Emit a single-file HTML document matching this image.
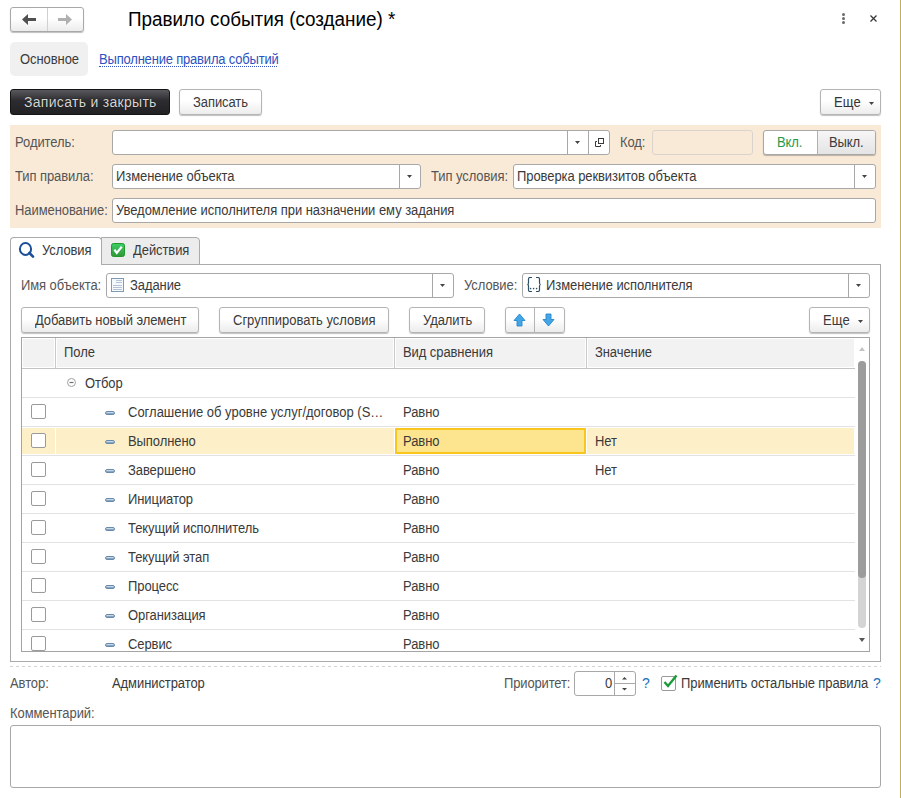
<!DOCTYPE html>
<html><head><meta charset="utf-8">
<style>
*{box-sizing:border-box;margin:0;padding:0}
html,body{width:901px;height:798px;overflow:hidden;background:#fff}
body{position:relative;font-family:"Liberation Sans",sans-serif;font-size:13px;color:#3a3a3a}
.a{position:absolute}
.t{position:absolute;line-height:15px;white-space:nowrap;letter-spacing:-0.08px;font-size:14px;transform:scaleX(0.928);transform-origin:0 0}
.lbl{color:#555}
.btn{position:absolute;border:1px solid #b4b4b4;border-radius:3px;background:linear-gradient(#fff 0%,#fff 45%,#ececec 100%);box-shadow:0 1px 1px rgba(0,0,0,.25)}
.inp{position:absolute;border:1px solid #a8a8a8;border-radius:3px;background:#fff}
.dd{position:absolute;top:0;bottom:0;border-left:1px solid #a8a8a8}
.tri{position:absolute;width:0;height:0;border-left:3px solid transparent;border-right:3px solid transparent;border-top:3px solid #444}
.hline{position:absolute;height:1px;background:#e2e2e2}
.cb{position:absolute;width:15px;height:15px;border:1px solid #9a9a9a;border-radius:2px;background:#fff}
.mi{position:absolute;width:10px;height:4px;border-radius:2px;background:linear-gradient(#c6d6e6 50%,#86a6c4 50%);border:1px solid #6a8aaa}
</style></head><body>

<!-- nav buttons -->
<div class="btn" style="left:10px;top:7px;width:74px;height:25px;border-color:#a8a8a8"></div>
<div class="a" style="left:47px;top:8px;width:1px;height:23px;background:#d0d0d0"></div>
<svg class="a" style="left:22px;top:14px" width="15" height="12" viewBox="0 0 15 12"><path d="M0 5.5 L6 0 V4 H14 V7 H6 V11 Z" fill="#505050"/></svg>
<svg class="a" style="left:57px;top:14px" width="15" height="12" viewBox="0 0 15 12"><path d="M15 5.5 L9 0 V4 H1 V7 H9 V11 Z" fill="#b0b0b0"/></svg>

<!-- title -->
<div class="t" style="left:128px;top:8px;font-size:20px;line-height:22px;color:#000;letter-spacing:0;transform:scaleX(0.943)">Правило события (создание) *</div>

<!-- kebab + close -->
<div class="a" style="left:842px;top:13px;width:3px;height:3px;border-radius:1.5px;background:#6a6a6a"></div>
<div class="a" style="left:842px;top:17px;width:3px;height:3px;border-radius:1.5px;background:#6a6a6a"></div>
<div class="a" style="left:842px;top:21px;width:3px;height:3px;border-radius:1.5px;background:#6a6a6a"></div>
<svg class="a" style="left:869px;top:14px" width="9" height="9" viewBox="0 0 9 9"><path d="M1.5 1.5 L7.5 7.5 M7.5 1.5 L1.5 7.5" stroke="#333" stroke-width="1.2"/></svg>

<!-- right olive line -->
<div class="a" style="left:900px;top:0;width:1px;height:798px;background:#c1ae56"></div>

<!-- page tabs -->
<div class="a" style="left:10px;top:42px;width:78px;height:34px;border-radius:5px;background:#f0f0f0"></div>
<div class="t" style="left:20px;top:52px;color:#3a3a3a">Основное</div>
<div class="t" style="left:99px;top:52px;color:#2d52c0;letter-spacing:-0.2px">Выполнение правила событий</div>
<div class="a" style="left:99px;top:66px;width:178px;height:1px;border-bottom:1px dotted #2d52c0"></div>

<!-- command bar -->
<div class="a" style="left:10px;top:89px;width:160px;height:26px;border-radius:3px;background:linear-gradient(#59595d 0%,#2c2c30 45%,#222225 100%);border:1px solid #141414"></div>
<div class="t" style="left:24px;top:95px;color:#d6d6d6;font-size:14px;letter-spacing:0.3px;text-shadow:0 0 1px #000;transform:none">Записать и закрыть</div>
<div class="btn" style="left:179px;top:89px;width:83px;height:26px"></div>
<div class="t" style="left:193px;top:95px;color:#3a3a3a">Записать</div>
<div class="btn" style="left:820px;top:89px;width:61px;height:26px"></div>
<div class="t" style="left:834px;top:95px;color:#333;letter-spacing:0.2px">Еще</div>
<svg class="a" style="left:869px;top:102px" width="5" height="3" viewBox="0 0 5 3"><path d="M0 0H5L2.5 3Z" fill="#444"/></svg>

<!-- peach panel -->
<div class="a" style="left:10px;top:125px;width:871px;height:103px;background:#f9ead7"></div>
<div class="t lbl" style="left:15px;top:135px">Родитель:</div>
<div class="inp" style="left:112px;top:130px;width:498px;height:25px">
  <div class="dd" style="left:454px;width:21px"><svg class="a" style="left:7px;top:10px" width="5" height="3" viewBox="0 0 5 3"><path d="M0 0H5L2.5 3Z" fill="#444"/></svg></div>
  <div class="dd" style="left:475px;width:21px"></div>
</div>
<svg class="a" style="left:594px;top:137px" width="11" height="11" viewBox="0 0 11 11"><rect x="4.5" y="1.5" width="5" height="5" fill="none" stroke="#3a3a3a"/><path d="M3 4.5H1.5V9.5H6.5V8" fill="none" stroke="#3a3a3a"/></svg>
<div class="t lbl" style="left:620px;top:135px">Код:</div>
<div class="a" style="left:652px;top:130px;width:101px;height:25px;border:1px solid #dcd4cc;border-radius:3px;background:#f9ead7"></div>
<div class="btn" style="left:763px;top:130px;width:113px;height:25px;background:#fff;border-color:#a8a8a8"></div>
<div class="a" style="left:817px;top:131px;width:58px;height:23px;background:linear-gradient(#f6f6f6,#e4e4e4);border-left:1px solid #b0b0b0;border-radius:0 2px 2px 0"></div>
<div class="t" style="left:777px;top:135px;color:#1e9a4a">Вкл.</div>
<div class="t" style="left:829px;top:135px;color:#3a3a3a">Выкл.</div>

<div class="t lbl" style="left:15px;top:169px">Тип правила:</div>
<div class="inp" style="left:112px;top:164px;width:309px;height:25px">
  <div class="dd" style="left:286px;width:21px"><svg class="a" style="left:7px;top:10px" width="5" height="3" viewBox="0 0 5 3"><path d="M0 0H5L2.5 3Z" fill="#444"/></svg></div>
</div>
<div class="t" style="left:116px;top:169px">Изменение объекта</div>
<div class="t lbl" style="left:431px;top:169px">Тип условия:</div>
<div class="inp" style="left:513px;top:164px;width:363px;height:25px">
  <div class="dd" style="left:340px;width:21px"><svg class="a" style="left:7px;top:10px" width="5" height="3" viewBox="0 0 5 3"><path d="M0 0H5L2.5 3Z" fill="#444"/></svg></div>
</div>
<div class="t" style="left:517px;top:169px">Проверка реквизитов объекта</div>

<div class="t lbl" style="left:15px;top:203px">Наименование:</div>
<div class="inp" style="left:112px;top:198px;width:764px;height:25px"></div>
<div class="t" style="left:116px;top:203px;letter-spacing:-0.04px">Уведомление исполнителя при назначении ему задания</div>

<!-- tabs -->
<div class="a" style="left:10px;top:264px;width:871px;height:398px;border:1px solid #aaa"></div>
<div class="a" style="left:10px;top:237px;width:92px;height:28px;border:1px solid #aaa;border-bottom:none;border-radius:4px 4px 0 0;background:#fff"></div>
<div class="a" style="left:101px;top:237px;width:99px;height:28px;border:1px solid #aaa;border-radius:0 4px 0 0;background:#ececec"></div>
<svg class="a" style="left:18px;top:241px" width="18" height="18" viewBox="0 0 18 18"><ellipse cx="7.5" cy="8" rx="5.6" ry="5.9" fill="none" stroke="#1a4e98" stroke-width="2"/><path d="M11.4 12 L15 15.6" stroke="#1a4e98" stroke-width="2.6" stroke-linecap="round"/></svg>
<div class="t" style="left:42px;top:243px;color:#3a3a3a">Условия</div>
<svg class="a" style="left:111px;top:243px" width="14" height="14" viewBox="0 0 14 14"><defs><linearGradient id="gg" x1="0" y1="0" x2="0" y2="1"><stop offset="0" stop-color="#3ccf68"/><stop offset="1" stop-color="#2f9736"/></linearGradient></defs><rect x="0.5" y="0.5" width="13" height="13" rx="2" fill="url(#gg)" stroke="#22992c"/><path d="M3.4 6.6 L5.8 10 L10.8 3.6" fill="none" stroke="#fff" stroke-width="2.2" stroke-linejoin="miter"/></svg>
<div class="t" style="left:133px;top:243px;color:#3a3a3a">Действия</div>

<!-- object row -->
<div class="t lbl" style="left:21px;top:278px">Имя объекта:</div>
<div class="inp" style="left:106px;top:273px;width:348px;height:25px">
  <div class="dd" style="left:325px;width:21px"><svg class="a" style="left:7px;top:10px" width="5" height="3" viewBox="0 0 5 3"><path d="M0 0H5L2.5 3Z" fill="#444"/></svg></div>
</div>
<svg class="a" style="left:111px;top:278px" width="13" height="14" viewBox="0 0 13 14"><rect x="0.5" y="0.5" width="12" height="13" fill="#f6f9fc" stroke="#7f9ab2"/><path d="M5 2.5H11M5 4.5H11M2 7.5H11M2 9.5H11M2 11.5H11" stroke="#b4c4d4"/></svg>
<div class="t" style="left:130px;top:278px">Задание</div>
<div class="t lbl" style="left:464px;top:278px">Условие:</div>
<div class="inp" style="left:522px;top:273px;width:348px;height:25px">
  <div class="dd" style="left:325px;width:21px"><svg class="a" style="left:7px;top:10px" width="5" height="3" viewBox="0 0 5 3"><path d="M0 0H5L2.5 3Z" fill="#444"/></svg></div>
</div>
<svg class="a" style="left:527px;top:277px" width="15" height="15" viewBox="0 0 15 15"><path d="M5 0.5H3Q1.5 0.5 1.5 2V6Q1.5 7.5 0.3 7.5Q1.5 7.5 1.5 9V13Q1.5 14.5 3 14.5H5M9 0.5H11Q12.5 0.5 12.5 2V6Q12.5 7.5 13.7 7.5Q12.5 7.5 12.5 9V13Q12.5 14.5 11 14.5H9" fill="none" stroke="#2f4f66" stroke-width="1.2"/><circle cx="3.6" cy="11.6" r="0.8" fill="#2f4f66"/><circle cx="6.6" cy="11.6" r="0.8" fill="#2f4f66"/><circle cx="9.6" cy="11.6" r="0.8" fill="#2f4f66"/></svg>
<div class="t" style="left:546px;top:278px">Изменение исполнителя</div>

<!-- table buttons -->
<div class="btn" style="left:21px;top:307px;width:178px;height:26px"></div>
<div class="t" style="left:35px;top:313px">Добавить новый элемент</div>
<div class="btn" style="left:219px;top:307px;width:170px;height:26px"></div>
<div class="t" style="left:233px;top:313px;letter-spacing:0">Сгруппировать условия</div>
<div class="btn" style="left:409px;top:307px;width:76px;height:26px"></div>
<div class="t" style="left:423px;top:313px">Удалить</div>
<div class="btn" style="left:505px;top:307px;width:60px;height:26px"></div>
<div class="a" style="left:534px;top:308px;width:1px;height:24px;background:#b4b4b4"></div>
<svg class="a" style="left:513px;top:313px" width="13" height="14" viewBox="0 0 13 14"><path d="M6.5 1 L12 7.5 H9 V13 H4 V7.5 H1 Z" fill="#43a6e6" stroke="#2a86c8" stroke-width="0.9" stroke-linejoin="round"/></svg>
<svg class="a" style="left:542px;top:313px" width="13" height="14" viewBox="0 0 13 14"><path d="M6.5 13 L12 6.5 H9 V1 H4 V6.5 H1 Z" fill="#43a6e6" stroke="#2a86c8" stroke-width="0.9" stroke-linejoin="round"/></svg>
<div class="btn" style="left:809px;top:307px;width:61px;height:26px"></div>
<div class="t" style="left:823px;top:313px;letter-spacing:0.2px">Еще</div>
<svg class="a" style="left:858px;top:320px" width="5" height="3" viewBox="0 0 5 3"><path d="M0 0H5L2.5 3Z" fill="#444"/></svg>

<!-- table -->
<div class="a" style="left:21px;top:337px;width:849px;height:315px;border:1px solid #a4a4a4"></div>
<div class="a" style="left:22px;top:338px;width:847px;height:313px;overflow:hidden">
<div class="a" style="left:1px;top:1px;width:31px;height:28px;background:#f2f2f2"></div>
<div class="a" style="left:35px;top:1px;width:336px;height:28px;background:#f2f2f2"></div>
<div class="a" style="left:374px;top:1px;width:189px;height:28px;background:#f2f2f2"></div>
<div class="a" style="left:566px;top:1px;width:266px;height:28px;background:#f2f2f2"></div>
<div class="a" style="left:33px;top:0;width:1px;height:30px;background:#c9c9c9"></div>
<div class="a" style="left:372px;top:0;width:1px;height:30px;background:#c9c9c9"></div>
<div class="a" style="left:564px;top:0;width:1px;height:30px;background:#c9c9c9"></div>
<div class="a" style="left:0;top:30px;width:833px;height:1px;background:#c4c4c4"></div>
<div class="t" style="left:42px;top:7px">Поле</div>
<div class="t" style="left:381px;top:7px">Вид сравнения</div>
<div class="t" style="left:573px;top:7px">Значение</div>
<svg class="a" style="left:45px;top:40px" width="9" height="9" viewBox="0 0 9 9"><circle cx="4.5" cy="4.5" r="4" fill="none" stroke="#a0a0a0"/><path d="M2.5 4.5 H6.5" stroke="#707070" stroke-width="1.2"/></svg>
<div class="t" style="left:63px;top:38px">Отбор</div>
<div class="hline" style="left:0;top:59px;width:833px"></div>
<div class="cb" style="left:9px;top:66px"></div>
<div class="mi" style="left:83px;top:73px"></div>
<div class="t" style="left:106px;top:67px;letter-spacing:0">Соглашение об уровне услуг/договор (S…</div>
<div class="t" style="left:381px;top:67px">Равно</div>
<div class="hline" style="left:0;top:88px;width:833px"></div>
<div class="a" style="left:0;top:90px;width:832px;height:26px;background:#fdf0c8"></div>
<div class="a" style="left:33px;top:90px;width:1px;height:26px;background:#fff"></div>
<div class="a" style="left:372px;top:90px;width:1px;height:26px;background:#fff"></div>
<div class="a" style="left:564px;top:90px;width:1px;height:26px;background:#fff"></div>
<div class="a" style="left:373px;top:90px;width:191px;height:26px;background:#fde48e;border:2px solid #f8c61c"></div>
<div class="cb" style="left:9px;top:95px"></div>
<div class="mi" style="left:83px;top:102px"></div>
<div class="t" style="left:106px;top:96px">Выполнено</div>
<div class="t" style="left:381px;top:96px">Равно</div>
<div class="t" style="left:573px;top:96px">Нет</div>
<div class="hline" style="left:0;top:117px;width:833px"></div>
<div class="cb" style="left:9px;top:124px"></div>
<div class="mi" style="left:83px;top:131px"></div>
<div class="t" style="left:106px;top:125px">Завершено</div>
<div class="t" style="left:381px;top:125px">Равно</div>
<div class="t" style="left:573px;top:125px">Нет</div>
<div class="hline" style="left:0;top:146px;width:833px"></div>
<div class="cb" style="left:9px;top:153px"></div>
<div class="mi" style="left:83px;top:160px"></div>
<div class="t" style="left:106px;top:154px">Инициатор</div>
<div class="t" style="left:381px;top:154px">Равно</div>
<div class="hline" style="left:0;top:175px;width:833px"></div>
<div class="cb" style="left:9px;top:182px"></div>
<div class="mi" style="left:83px;top:189px"></div>
<div class="t" style="left:106px;top:183px">Текущий исполнитель</div>
<div class="t" style="left:381px;top:183px">Равно</div>
<div class="hline" style="left:0;top:204px;width:833px"></div>
<div class="cb" style="left:9px;top:211px"></div>
<div class="mi" style="left:83px;top:218px"></div>
<div class="t" style="left:106px;top:212px">Текущий этап</div>
<div class="t" style="left:381px;top:212px">Равно</div>
<div class="hline" style="left:0;top:233px;width:833px"></div>
<div class="cb" style="left:9px;top:240px"></div>
<div class="mi" style="left:83px;top:247px"></div>
<div class="t" style="left:106px;top:241px">Процесс</div>
<div class="t" style="left:381px;top:241px">Равно</div>
<div class="hline" style="left:0;top:262px;width:833px"></div>
<div class="cb" style="left:9px;top:269px"></div>
<div class="mi" style="left:83px;top:276px"></div>
<div class="t" style="left:106px;top:270px">Организация</div>
<div class="t" style="left:381px;top:270px">Равно</div>
<div class="hline" style="left:0;top:291px;width:833px"></div>
<div class="cb" style="left:9px;top:298px"></div>
<div class="mi" style="left:83px;top:305px"></div>
<div class="t" style="left:106px;top:299px">Сервис</div>
<div class="t" style="left:381px;top:299px">Равно</div>
<div class="hline" style="left:0;top:320px;width:833px"></div>
<div class="tri" style="left:837px;top:9px;border-top:none;border-bottom:4px solid #c4c4c4;border-left-width:3px;border-right-width:3px"></div>
<div class="a" style="left:836px;top:23px;width:8px;height:267px;border-radius:4px;background:#d4d4d4"></div>
<div class="a" style="left:836px;top:23px;width:8px;height:217px;border-radius:4px;background:#9c9c9c"></div>
<div class="tri" style="left:837px;top:300px;border-top:4px solid #555;border-left-width:3px;border-right-width:3px"></div>
</div>
<!-- bottom -->
<div class="a" style="left:10px;top:666px;width:871px;height:1px;background:repeating-linear-gradient(90deg,#d2d2d2 0,#d2d2d2 3px,transparent 3px,transparent 6px)"></div>
<div class="t lbl" style="left:10px;top:676px">Автор:</div>
<div class="t" style="left:112px;top:676px">Администратор</div>
<div class="t lbl" style="left:504px;top:676px;letter-spacing:-0.15px">Приоритет:</div>
<div class="inp" style="left:574px;top:671px;width:62px;height:25px">
  <div class="a" style="left:39px;top:0;width:1px;height:23px;background:#a8a8a8"></div>
  <div class="a" style="left:40px;top:11px;width:20px;height:1px;background:#a8a8a8"></div>
  <svg class="a" style="left:47px;top:5px" width="5" height="3" viewBox="0 0 5 3"><path d="M0 2.6H5L2.5 0Z" fill="#444"/></svg>
  <svg class="a" style="left:47px;top:16px" width="5" height="3" viewBox="0 0 5 3"><path d="M0 0H5L2.5 2.6Z" fill="#444"/></svg>
</div>
<div class="t" style="left:605px;top:676px">0</div>
<div class="t" style="left:642px;top:676px;color:#1a6fb8;font-size:14px;transform:none">?</div>
<div class="cb" style="left:661px;top:676px"></div>
<svg class="a" style="left:662px;top:674px" width="16" height="16" viewBox="0 0 16 16"><path d="M2.5 8 L6 12 L14.5 1.5" fill="none" stroke="#1a9a3a" stroke-width="2.4"/></svg>
<div class="t" style="left:681px;top:676px;letter-spacing:-0.1px">Применить остальные правила</div>
<div class="t" style="left:873px;top:676px;color:#1a6fb8;font-size:14px;transform:none">?</div>
<div class="t lbl" style="left:10px;top:706px">Комментарий:</div>
<div class="inp" style="left:10px;top:725px;width:871px;height:63px"></div>
</body></html>
